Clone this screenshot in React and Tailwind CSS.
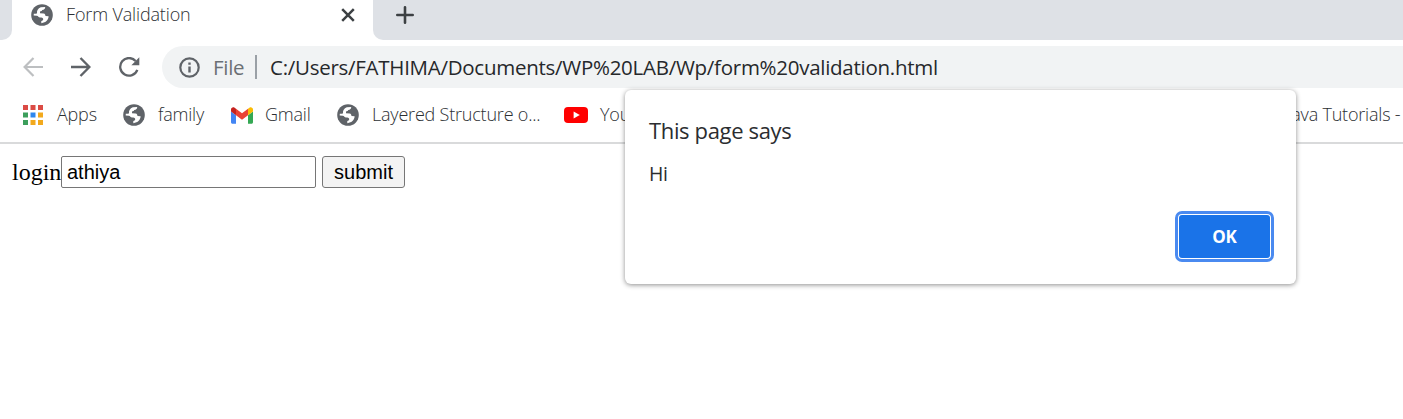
import React from "react";

const ui = "font-['Open_Sans','Noto_Sans',sans-serif] whitespace-pre leading-none";

function Globe() {
  return (
    <svg className="block h-[22px] w-[22px] shrink-0" viewBox="0 0 22 22">
      <circle cx="11" cy="11" r="10.8" fill="#5f6368" />
      <path
        d="M9.8 3.2 L14.2 3.1 C14.3 4.9 13.2 5.9 11.2 6.1 C10.9 7.1 10.2 7.5 9 7.6 L9 9.3 L12.6 9.4 C14.1 9.6 14.4 10.7 14.5 11.9 L17.6 12.3 C17.6 15.5 15 18.8 10.3 19.2 L10.3 17.1 C11.6 16.8 12.3 16.2 12.2 15.1 C12 13.8 10.7 13.6 9 13.5 C7.6 13.3 7.3 11.9 5.8 11.7 L2.7 11.5 L2.8 9.7 C4.4 9.6 5.2 9.6 6 9.4 C5.7 6.3 7 4.4 9.8 3.2Z"
        fill="white"
      />
    </svg>
  );
}

function AppsIcon() {
  const colors = ["#db4b45", "#db4b45", "#db4b45", "#3c9f5c", "#2f87ee", "#f2a91d", "#3c9f5c", "#f2a91d", "#f2a91d"];
  return (
    <svg className="block h-5 w-5 shrink-0" viewBox="0 0 20 20">
      {colors.map((c, i) => (
        <rect key={i} x={(i % 3) * 7.5} y={Math.floor(i / 3) * 7.5} width="5" height="5" fill={c} />
      ))}
    </svg>
  );
}

function GmailIcon() {
  return (
    <svg className="block h-[17px] w-[22px] shrink-0" viewBox="52 42 88 66">
      <path fill="#4285f4" d="M58 108h14V74L52 59v43c0 3.32 2.69 6 6 6" />
      <path fill="#34a853" d="M120 108h14c3.32 0 6-2.69 6-6V59l-20 15" />
      <path fill="#fbbc04" d="M120 48v26l20-15v-8c0-7.42-8.47-11.65-14.4-7.2" />
      <path fill="#ea4335" d="M72 74V48l24 18 24-18v26L96 92" />
      <path fill="#c5221f" d="M52 51v8l20 15V48l-5.6-4.2c-5.94-4.45-14.4-.22-14.4 7.2" />
    </svg>
  );
}

function Bookmark({ icon, label, className }) {
  return (
    <div className={`flex h-[54px] shrink-0 items-center ${className}`}>
      {icon}
      <span className="pb-0.5 leading-6">{label}</span>
    </div>
  );
}

function YouTubeIcon() {
  return (
    <svg className="h-4 w-6 shrink-0" viewBox="0 0 24 16">
      <rect width="24" height="16" rx="4" fill="#f00" />
      <path d="M9.6 4.6 15.8 8 9.6 11.4Z" fill="white" />
    </svg>
  );
}

export default function App() {
  return (
    <div className="relative h-[419px] w-[1403px] overflow-hidden bg-white">
      <div className="flex h-10 bg-white">
        <div className="w-3 rounded-br-[10px] bg-[#dee1e6]" />
        <div className="flex h-[30px] w-[361px] items-center pl-[19px]">
          <Globe />
          <span className={`${ui} ml-[13px] w-[240px] pb-0.5 text-[18px] font-light tracking-[-0.15px] text-[#2c2f33]`}>Form Validation</span>
          <svg className="ml-[35px] h-3.5 w-3.5 shrink-0" viewBox="0 0 14 14" stroke="#3c4043" strokeWidth="2.5">
            <path d="M1.2 1.2 12.8 12.8M12.8 1.2 1.2 12.8" />
          </svg>
        </div>
        <div className="flex flex-1 rounded-bl-[10px] bg-[#dee1e6] pt-[6px] pl-[23px]">
          <svg className="h-[18px] w-[18px]" viewBox="0 0 18 18" stroke="#3c4043" strokeWidth="2.6" strokeLinecap="round">
            <path d="M9 1.3V16.7M1.3 9H16.7" />
          </svg>
        </div>
      </div>

      <div className="flex h-[54px] items-center pl-[23px]">
        <svg className="h-5 w-5" viewBox="0 0 20 20" fill="none" stroke="#bdbfc1" strokeWidth="2.2">
          <path d="M20 10H1.8M10.5 1 1.6 10 10.5 19" />
        </svg>
        <svg className="ml-[28px] h-5 w-5" viewBox="0 0 20 20" fill="none" stroke="#5f6368" strokeWidth="2.4">
          <path d="M0 10H18.2M9.5 1 18.4 10 9.5 19" />
        </svg>
        <svg className="ml-[28px] h-5 w-[21px]" viewBox="0 0 21 20" fill="none">
          <path d="M16.6 4A8.8 8.8 0 1 0 18.3 12.8" stroke="#5f6368" strokeWidth="2.3" />
          <path d="M20.3 0.3V8.2H12.4Z" fill="#5f6368" />
        </svg>
        <div className="ml-[22px] flex h-[42px] flex-1 items-center rounded-l-full bg-[#f1f3f4] pl-[17px]">
          <svg className="h-[21px] w-[21px]" viewBox="0 0 21 21" fill="none" stroke="#5f6368">
            <circle cx="10.5" cy="10.5" r="9.2" strokeWidth="2.2" />
            <path d="M10.5 9.5V15.5M10.5 5.5V7.8" strokeWidth="2.4" />
          </svg>
          <span className={`${ui} ml-[13px] w-[42px] text-[20.5px] tracking-[-0.3px] text-[#6b6f74]`}>File</span>
          <div className="h-6 w-0.5 bg-[#9aa0a6]" />
          <span className={`${ui} ml-[13px] text-[20.5px] tracking-[-0.27px] text-[#26282b]`}>
            C:/Users/FATHIMA/Documents/WP%20LAB/Wp/form%20validation.html
          </span>
        </div>
      </div>

      <div className={`${ui} flex h-[50px] items-start overflow-hidden border-b-2 border-[#d9dadb] pl-[23px] text-[18px] font-light tracking-[-0.2px] text-[#2c2f33]`}>
        <div className="-mt-[6px] flex">
          <Bookmark className="w-[100px] gap-[14px]" icon={<AppsIcon />} label="Apps" />
          <Bookmark className="w-[108px] gap-[13px]" icon={<Globe />} label="family" />
          <Bookmark className="w-[106px] gap-[12px]" icon={<GmailIcon />} label="Gmail" />
          <Bookmark className="w-[227px] gap-[13px]" icon={<Globe />} label="Layered Structure o..." />
          <Bookmark className="w-[723px] gap-3" icon={<YouTubeIcon />} label="You" />
          <Bookmark className="" label="Java Tutorials -" />
        </div>
      </div>

      <div className="flex items-center pt-3 pl-3 text-black">
        <span className="w-[49px] font-['Liberation_Serif',serif] text-[24px] leading-8">login</span>
        <input
          className="h-8 w-[255px] rounded-[2px] border border-[#767676] bg-white px-[5px] font-['Liberation_Sans',sans-serif] text-[20px] outline-none"
          defaultValue="athiya"
        />
        <button className="ml-[6px] h-8 w-[83px] rounded-[3px] border border-[#767676] bg-[#f3f3f3] font-['Liberation_Sans',sans-serif] text-[20px] leading-none">
          submit
        </button>
      </div>

      <div className={`${ui} absolute top-[90px] left-[625px] flex h-[194px] w-[671px] flex-col rounded-[6px] bg-white pt-[29px] pr-[22px] pl-6 shadow-[0_1px_5px_rgba(0,0,0,0.45)]`}>
        <h1 className="text-[22px] tracking-[-0.35px] text-[#2b2d30]">This page says</h1>
        <p className="mt-[23px] text-[19.5px] tracking-[-0.5px] text-[#2b2d30]">Hi</p>
        <button className="mt-[27px] h-[51px] w-[99px] self-end rounded-[7px] border-[3px] border-[#4a8af0] bg-white p-px">
          <span className="flex h-full w-full items-center justify-center rounded-[3px] bg-[#1a73e8] text-[17px] font-bold tracking-[-0.2px] text-white">OK</span>
        </button>
      </div>
    </div>
  );
}
